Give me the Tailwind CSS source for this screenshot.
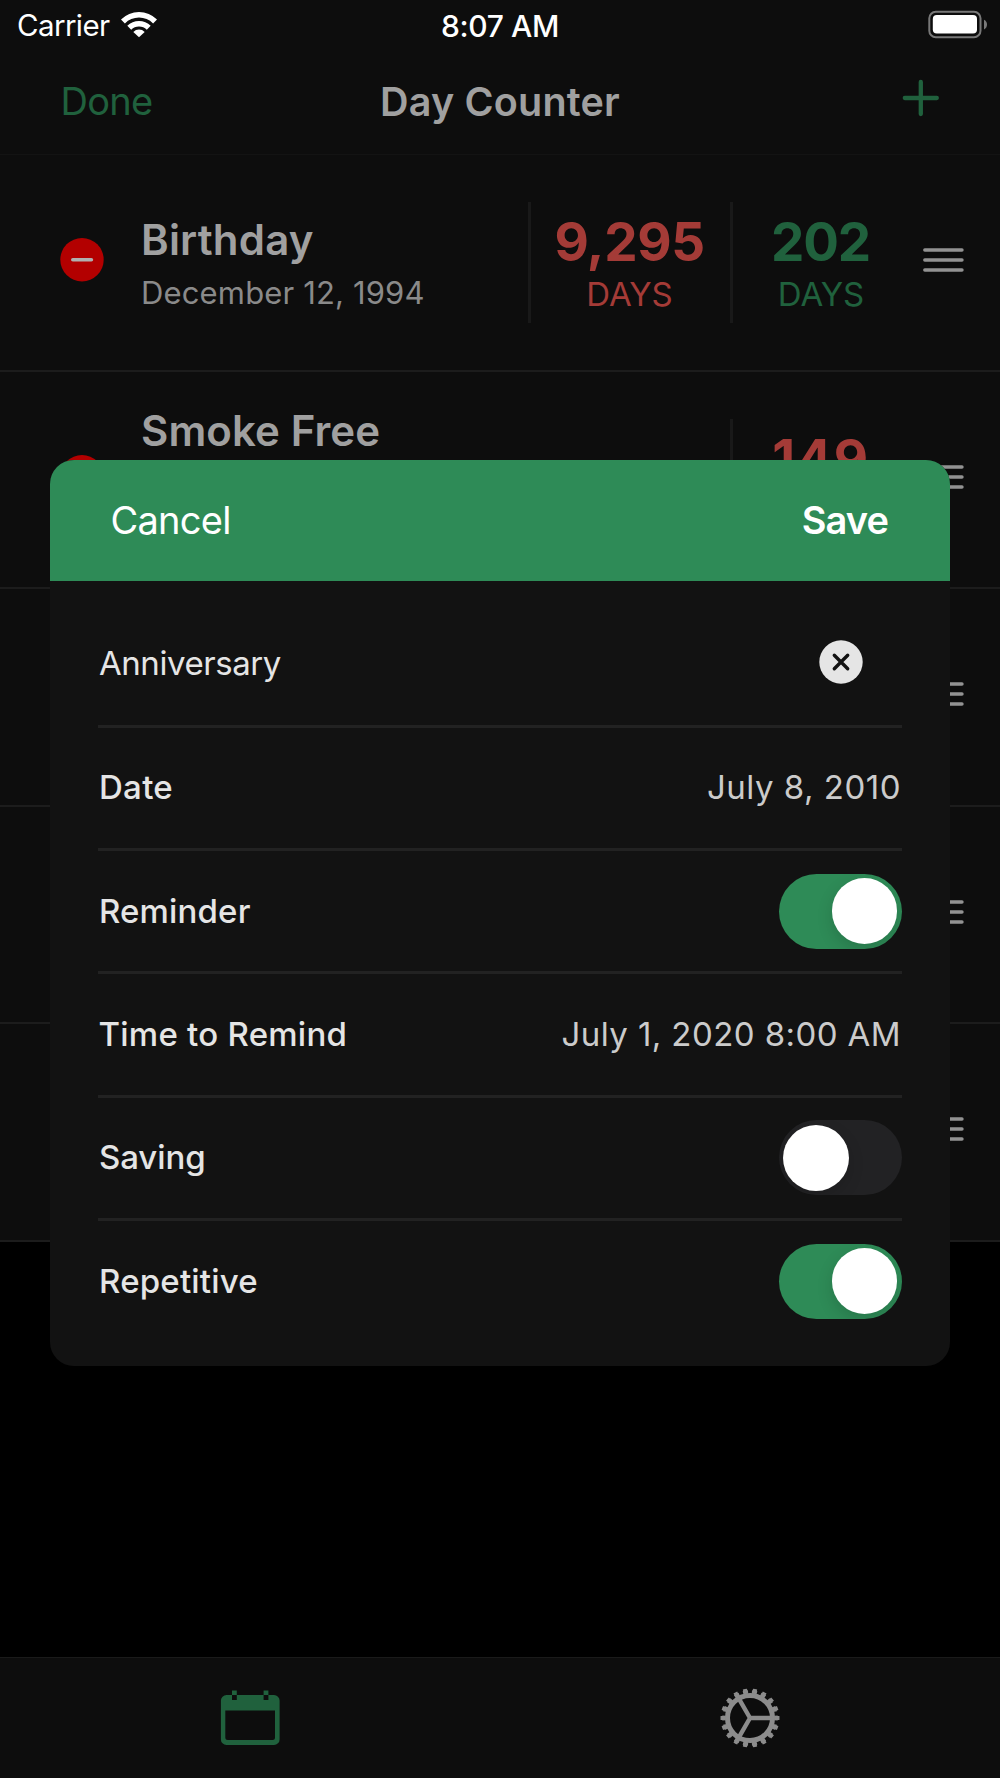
<!DOCTYPE html>
<html lang="en">
<head>
    <meta charset="UTF-8">
    <meta name="viewport" content="width=device-width, initial-scale=1.0">
    <title>Day Counter</title>
    <script src="https://cdn.jsdelivr.net/npm/@tailwindcss/browser@4"></script>
</head>
<body class="bg-black font-[Inter,sans-serif]">
    <div class="relative w-[1000px] h-[1778px] overflow-hidden flex flex-col bg-black text-[#a0a0a0]">

        <!-- Status bar and navigation -->
        <header class="h-[154.7px] shrink-0 bg-[#0d0d0d]">
            <div class="h-[50px] grid grid-cols-3 items-center text-white text-[30px] leading-none">
                <div class="flex items-center pl-[17px]">
                    <span class="mt-px text-[29.5px] tracking-[-0.6px]">Carrier</span>
                    <svg class="ml-[10px] -mt-[3px]" width="38" height="28" viewBox="0 0 38 28">
                        <path d="M1 9.5a25.5 25.5 0 0 1 36 0l-3.9 3.9a20 20 0 0 0-28.2 0z" fill="#fff"/>
                        <path d="M7.3 15.8a16.5 16.5 0 0 1 23.4 0l-3.9 3.9a11 11 0 0 0-15.6 0z" fill="#fff"/>
                        <path d="M13.3 21.9a8.1 8.1 0 0 1 11.4 0L19 27.2z" fill="#fff"/>
                    </svg>
                </div>
                <span class="mt-px text-center font-medium tracking-[-0.35px]">8:07 AM</span>
                <svg class="ml-auto mr-[12px]" width="62" height="30" viewBox="0 0 62 30">
                    <rect x="3.3" y="1.8" width="51.2" height="25.4" rx="6.5" fill="none" stroke="#787878" stroke-width="2"/>
                    <rect x="6.8" y="5" width="44.2" height="18.6" rx="4" fill="#fff"/>
                    <path d="M58 9.8c4 1.4 4 8.2 0 9.6z" fill="#7a7a7a"/>
                </svg>
            </div>
            <div class="h-[104px] grid grid-cols-3 items-center">
                <span class="pl-[60.5px] -mt-[3px] text-[38px] tracking-[-0.7px] leading-none text-[#20613d]">Done</span>
                <h1 class="mt-px text-center text-[39.5px] tracking-[0.2px] leading-none font-semibold">Day Counter</h1>
                <svg class="ml-auto mr-[60px] -mt-[8px]" width="38" height="38" viewBox="0 0 38 38">
                    <path d="M18.8 3v32M2.8 19h32" stroke="#20613d" stroke-width="4.3" stroke-linecap="round"/>
                </svg>
            </div>
            <div class="h-px bg-[#131313]"></div>
        </header>

        <!-- Counters -->
        <ul>
            <li class="h-[217.4px] flex items-start bg-[#0d0d0d] border-b-2 border-[#1c1c1c]">
                <svg class="ml-[60px] mt-[83px]" width="44" height="44" viewBox="0 0 44 44">
                    <circle cx="22" cy="21.7" r="21.7" fill="#b30000"/>
                    <path d="M12.8 21.7h18.6" stroke="#b0b0b0" stroke-width="3.6" stroke-linecap="round"/>
                </svg>
                <div class="ml-[37px] mt-[64px] flex-1">
                    <h2 class="text-[42px] leading-none font-semibold tracking-[0.2px]">Birthday</h2>
                    <p class="mt-4 text-[31px] leading-none tracking-[0.15px] text-[#8a8a8a]">December 12, 1994</p>
                </div>
                <div class="mt-[47px] w-[202px] h-[121px] pt-[14px] pr-[2px] border-l-3 border-[#191919] text-center text-[#a43b37]">
                    <p class="text-[53px] leading-none font-bold tracking-[-0.4px]">9,295</p>
                    <p class="mt-[9px] text-[33px] leading-none">DAYS</p>
                </div>
                <div class="mt-[47px] w-[179px] h-[121px] pt-[14px] border-l-3 border-[#191919] text-center text-[#20613d]">
                    <p class="pr-px text-[53px] leading-none font-bold tracking-[-1.1px]">202</p>
                    <p class="mt-[9px] text-[33px] leading-none">DAYS</p>
                </div>
                <svg class="ml-[14px] mr-9 mt-[92px]" width="41" height="26" viewBox="0 0 41 26">
                    <path d="M1.8 3h37.2M1.8 13h37.2M1.8 23h37.2" stroke="#929292" stroke-width="3.4" stroke-linecap="round"/>
                </svg>
            </li>
            <li class="h-[217.4px] flex items-start bg-[#0d0d0d] border-b-2 border-[#1c1c1c]">
                <svg class="ml-[60px] mt-[83px]" width="44" height="44" viewBox="0 0 44 44">
                    <circle cx="22" cy="21.7" r="21.7" fill="#b30000"/>
                </svg>
                <div class="ml-[37px] mt-[38px] flex-1">
                    <h2 class="text-[42px] leading-none font-semibold tracking-[0.1px]">Smoke Free</h2>
                </div>
                <div class="mt-[47px] w-[179px] h-[121px] pt-[14px] border-l-3 border-[#191919] text-center text-[#a43b37]">
                    <p class="text-[53px] leading-none font-bold tracking-[1.4px]">149</p>
                </div>
                <svg class="ml-[14px] mr-9 mt-[92px]" width="41" height="26" viewBox="0 0 41 26">
                    <path d="M1.8 3h37.2M1.8 13h37.2M1.8 23h37.2" stroke="#929292" stroke-width="3.4" stroke-linecap="round"/>
                </svg>
            </li>
            <li class="h-[217.4px] flex items-start justify-end bg-[#0d0d0d] border-b-2 border-[#1c1c1c]">
                <svg class="mr-9 mt-[92px]" width="41" height="26" viewBox="0 0 41 26">
                    <path d="M1.8 3h37.2M1.8 13h37.2M1.8 23h37.2" stroke="#929292" stroke-width="3.4" stroke-linecap="round"/>
                </svg>
            </li>
            <li class="h-[217.4px] flex items-start justify-end bg-[#0d0d0d] border-b-2 border-[#1c1c1c]">
                <svg class="mr-9 mt-[92px]" width="41" height="26" viewBox="0 0 41 26">
                    <path d="M1.8 3h37.2M1.8 13h37.2M1.8 23h37.2" stroke="#929292" stroke-width="3.4" stroke-linecap="round"/>
                </svg>
            </li>
            <li class="h-[217.4px] flex items-start justify-end bg-[#0d0d0d] border-b-2 border-[#1c1c1c]">
                <svg class="mr-9 mt-[92px]" width="41" height="26" viewBox="0 0 41 26">
                    <path d="M1.8 3h37.2M1.8 13h37.2M1.8 23h37.2" stroke="#929292" stroke-width="3.4" stroke-linecap="round"/>
                </svg>
            </li>
        </ul>

        <!-- Tab bar -->
        <nav class="mt-auto h-[121px] shrink-0 grid grid-cols-2 justify-items-center items-start bg-[#0d0d0d] border-t border-[#1a1a1a]">
            <svg class="mt-8" width="60" height="56" viewBox="0 0 60 56">
                <path fill-rule="evenodd" d="M6.500 5h47.500a5.600 5.600 0 0 1 5.600 5.600v38.800a5.600 5.600 0 0 1-5.600 5.600H6.500a5.600 5.600 0 0 1-5.600-5.600V10.600A5.600 5.600 0 0 1 6.500 5zM5.300 20.600v27a2.500 2.500 0 0 0 2.500 2.500h44.700a2.500 2.500 0 0 0 2.500-2.500v-27z" fill="#20613d"/>
                <path d="M12 5h4.800v5H12zM43.600 5h4.800v5h-4.800z" fill="#0d0d0d"/>
                <path d="M12 .5h4.800V5H12zM43.600.5h4.800V5h-4.800z" fill="#20613d"/>
            </svg>
            <svg class="mt-[29.7px]" width="60" height="60" viewBox="-30 -30 60 60">
                <g fill="none" stroke="#8c8c8c">
                    <circle r="22.5" stroke-width="5"/>
                    <circle r="26" stroke-width="3.6" pathLength="180" stroke-dasharray="5.6 4.4" stroke-dashoffset="2.8"/>
                    <circle r="28.2" stroke-width="2.6" pathLength="180" stroke-dasharray="4.2 5.8" stroke-dashoffset="2.1"/>
                    <path d="M0 0H22M0 0L-11 -19.05M0 0L-11 19.05" stroke-width="4.4"/>
                </g>
            </svg>
        </nav>

        <!-- Edit dialog -->
        <div class="absolute left-[50px] top-[460px] w-[900px] h-[905.5px] rounded-[24px] overflow-hidden bg-[#121212] text-[#e5e5e5]">
            <div class="h-[120.5px] flex items-center justify-between pl-[60.5px] pr-[62px] pb-px bg-[#2e8b57] text-white text-[38px] leading-none">
                <span class="tracking-[-0.75px]">Cancel</span>
                <span class="font-semibold tracking-[-0.9px]">Save</span>
            </div>
            <div class="mx-12 mt-[24px] text-[33px] leading-none font-medium">
                <div class="h-[123.3px] flex items-center justify-between border-b-3 border-[#222222]">
                    <span class="pl-[1px] -mt-[2px] font-normal tracking-[-0.45px]">Anniversary</span>
                    <svg class="mr-[39.5px] -mt-[6px]" width="44" height="44" viewBox="0 0 44 44">
                        <circle cx="22" cy="22" r="21.7" fill="#e5e5e5"/>
                        <path d="M15.3 15.3l13.4 13.4M28.7 15.3l-13.4 13.4" stroke="#121212" stroke-width="3.4" stroke-linecap="round"/>
                    </svg>
                </div>
                <div class="h-[123.3px] flex items-center justify-between border-b-3 border-[#222222]">
                    <span class="pl-px tracking-[0.3px]">Date</span>
                    <span class="pr-px font-normal tracking-[0.5px] text-[#cbcbcb]">July 8, 2010</span>
                </div>
                <div class="h-[123.3px] flex items-center justify-between border-b-3 border-[#222222]">
                    <span class="pl-px tracking-[0.15px]">Reminder</span>
                    <span class="flex justify-end items-center w-[123.5px] h-[75px] px-[5px] rounded-full bg-[#2e8b57] overflow-hidden">
                        <span class="size-[65.5px] rounded-full bg-white shadow-[0_6px_16px_rgba(0,0,0,0.15)]"></span>
                    </span>
                </div>
                <div class="h-[123.3px] flex items-center justify-between border-b-3 border-[#222222]">
                    <span class="pl-[0.5px] tracking-[0.25px]">Time to Remind</span>
                    <span class="pr-px font-normal tracking-[0.42px] text-[#cbcbcb]">July 1, 2020 8:00 AM</span>
                </div>
                <div class="h-[123.3px] flex items-center justify-between border-b-3 border-[#222222]">
                    <span class="pl-px tracking-[-0.1px]">Saving</span>
                    <span class="flex items-center w-[123.5px] h-[75px] px-[4.5px] rounded-full bg-[#222224] overflow-hidden">
                        <span class="size-[65.5px] rounded-full bg-white shadow-[0_6px_16px_rgba(0,0,0,0.15)]"></span>
                    </span>
                </div>
                <div class="h-[120.5px] flex items-center justify-between">
                    <span class="pl-px tracking-[0.2px]">Repetitive</span>
                    <span class="flex justify-end items-center w-[123.5px] h-[75px] px-[5px] rounded-full bg-[#2e8b57] overflow-hidden">
                        <span class="size-[65.5px] rounded-full bg-white shadow-[0_6px_16px_rgba(0,0,0,0.15)]"></span>
                    </span>
                </div>
            </div>
        </div>
    </div>
</body>
</html>
